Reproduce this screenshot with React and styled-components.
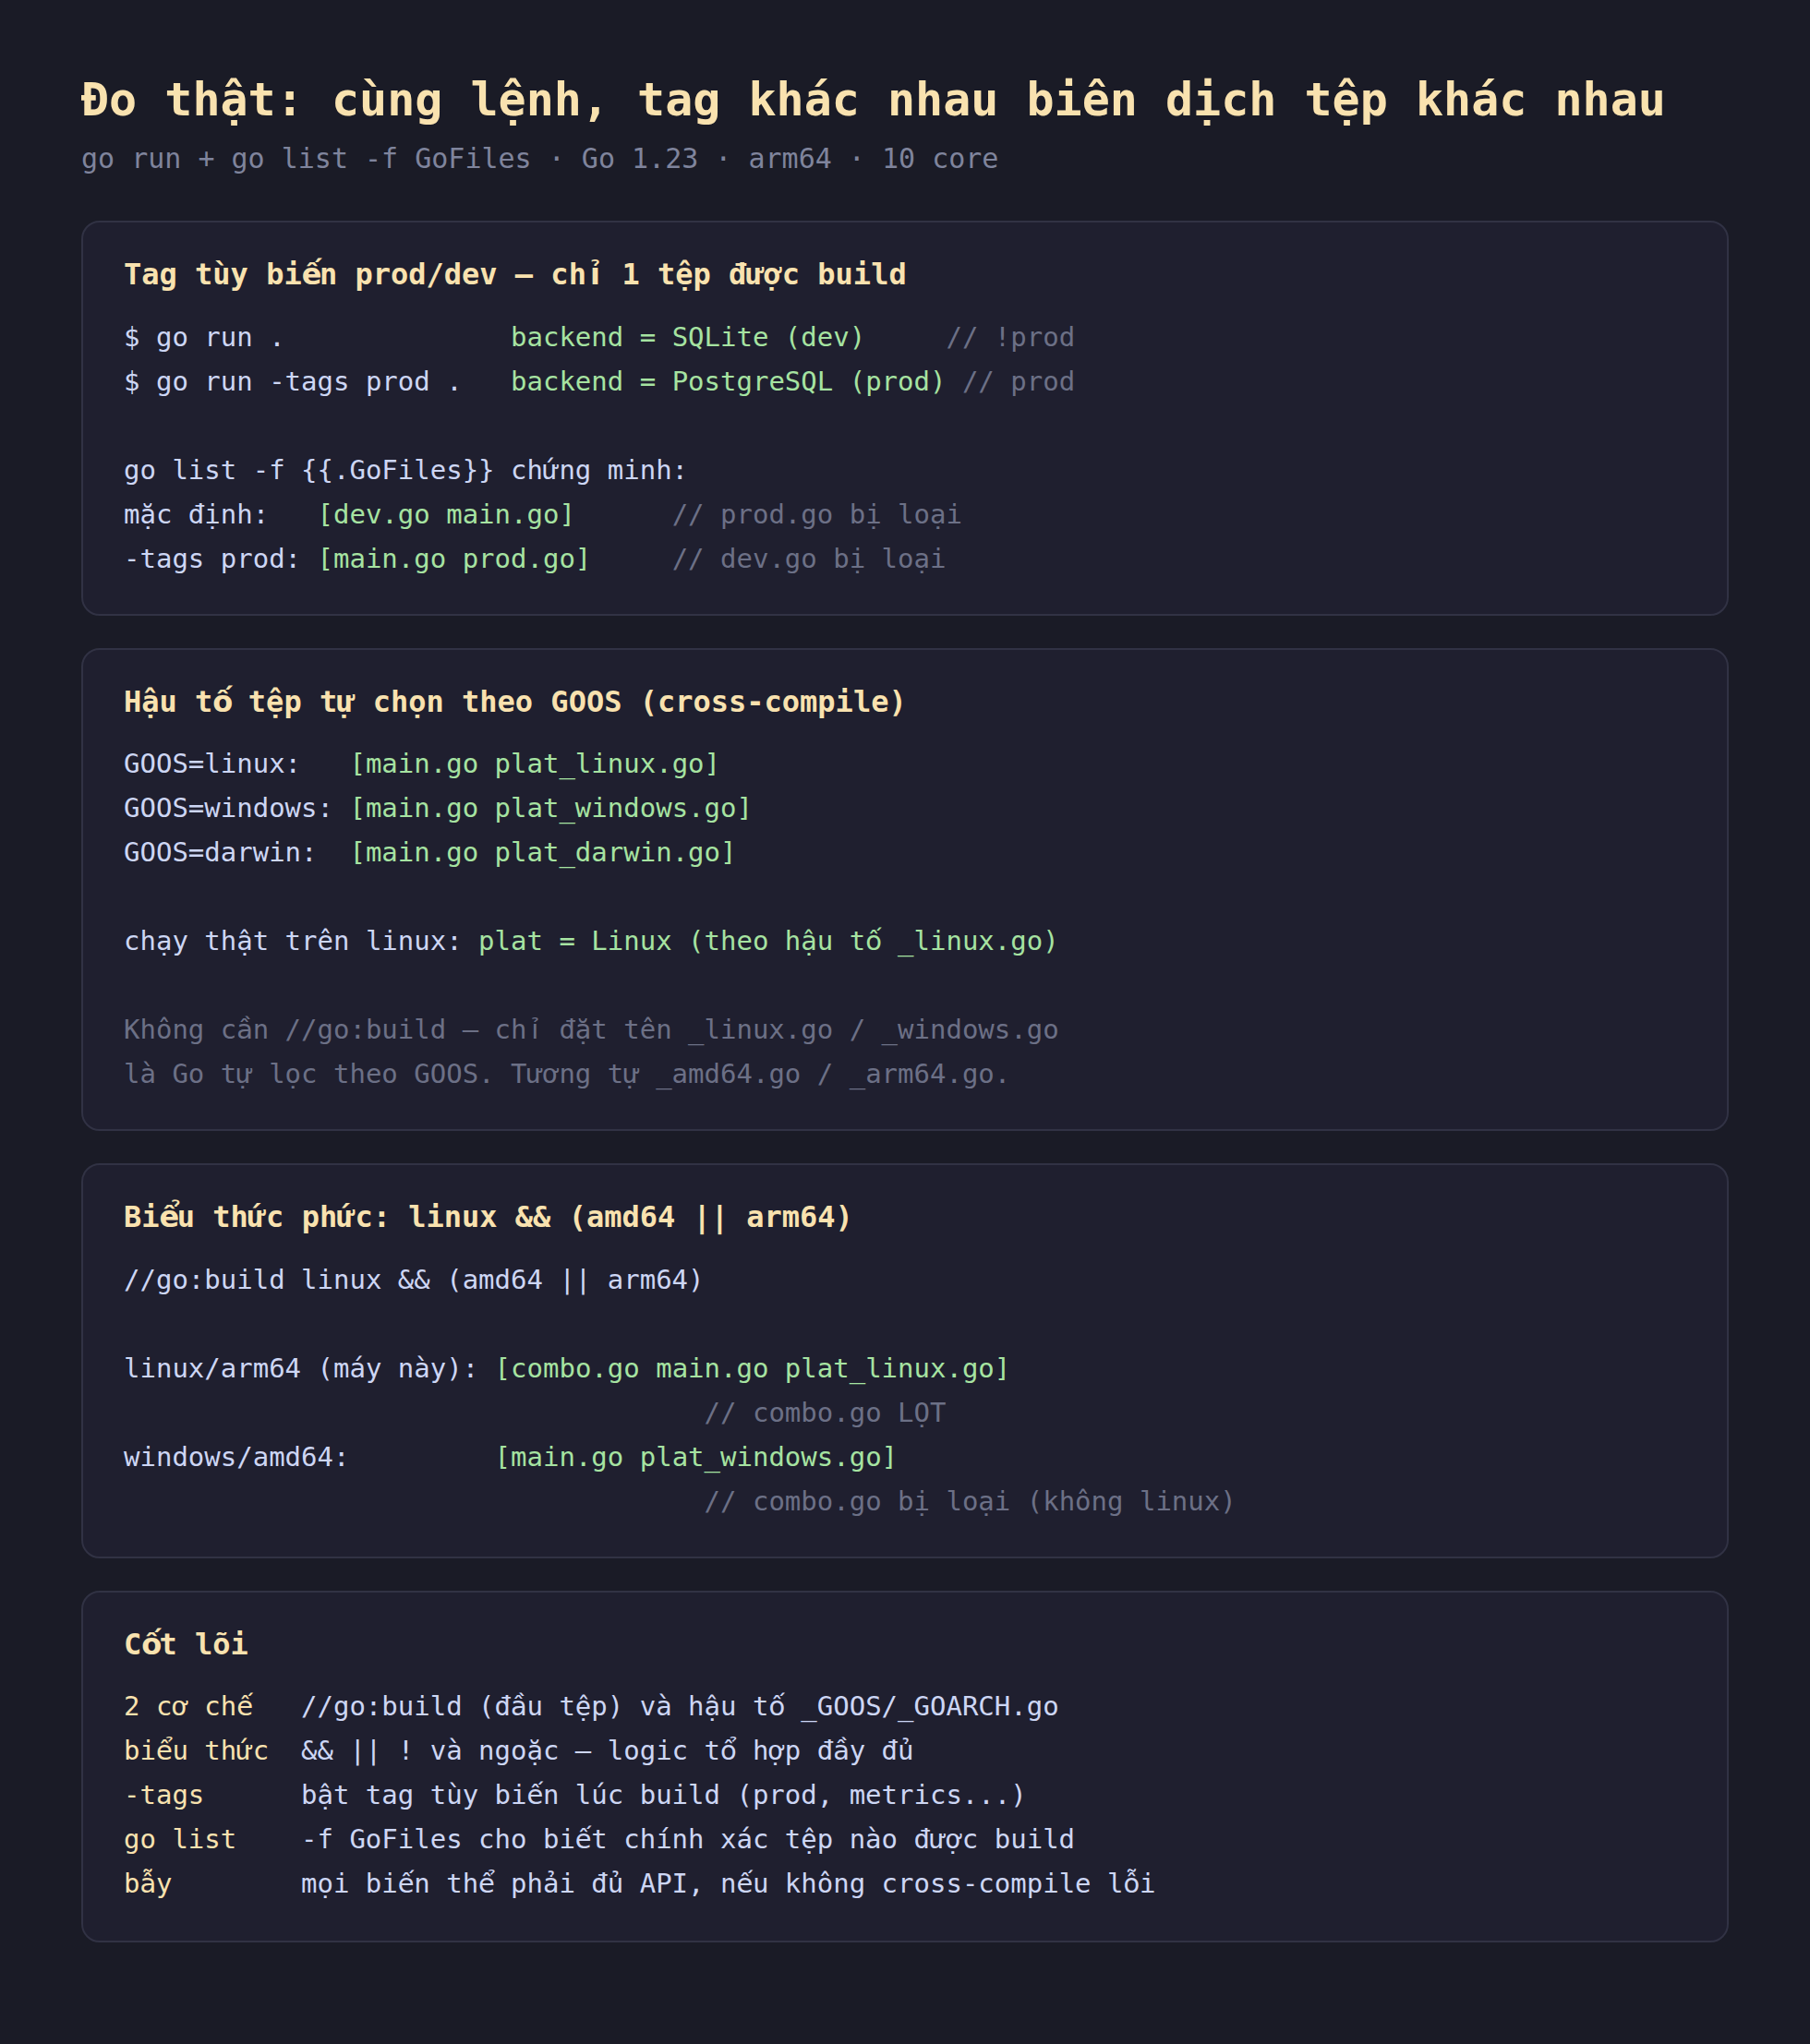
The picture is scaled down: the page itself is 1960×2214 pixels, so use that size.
import React from "react";
import styled, { createGlobalStyle } from "styled-components";

const GlobalStyle = createGlobalStyle`
  html, body {
    margin: 0;
    padding: 0;
    background: #1a1b26;
  }
  body {
    font-family: "DejaVu Sans Mono", monospace;
    color: #cdd6f4;
    min-height: 100vh;
  }
`;

const Page = styled.main`
  padding: 78px 88px 110px;
  display: flex;
  flex-direction: column;
  gap: 35px;
`;

const Header = styled.header`
  margin-bottom: 14px;
`;

const Title = styled.h1`
  margin: 0;
  font-size: 50px;
  line-height: 60px;
  font-weight: 700;
  color: #f9e2af;
`;

const Subtitle = styled.p`
  margin: 16px 0 0;
  font-size: 30px;
  line-height: 36px;
  color: #7f849c;
`;

const Card = styled.section`
  background: #1f1f2f;
  border: 2px solid #313244;
  border-radius: 20px;
  padding: 36px 44px;
`;

const CardTitle = styled.h2`
  margin: 0 0 22px;
  font-size: 32px;
  line-height: 1.3;
  font-weight: 700;
  color: #f9e2af;
`;

const Code = styled.div`
  font-size: 29px;
  line-height: 48px;
  white-space: pre;
  color: #cdd6f4;
`;

const Line = styled.div`
  min-height: 48px;
  color: ${(p) => (p.$muted ? "#6c7086" : "inherit")};
`;

const Ok = styled.span`
  color: #a6e3a1;
`;

const Note = styled.span`
  color: #6c7086;
`;

/* DejaVu Sans Mono lacks the stacked-mark Vietnamese letters,
   so they come from DejaVu Sans, held in a monospace cell */
const Glyph = styled.span`
  display: inline-block;
  width: 0.602em;
  text-align: center;
  font-family: "DejaVu Sans", sans-serif;
`;

const Summary = styled.dl`
  margin: 0 0 2px;
  display: grid;
  grid-template-columns: 9ch 1fr;
  column-gap: 2ch;
  font-size: 29px;
  line-height: 48px;
  white-space: pre;
`;

const Term = styled.dt`
  color: #f9e2af;
`;

const Desc = styled.dd`
  margin: 0;
  color: #cdd6f4;
`;

const SPLIT = /([ấầẩẫắằẳẵếềểễốồổỗỉ])/;

const v = (text) =>
  text.split(SPLIT).map((part, i) => (i % 2 === 1 ? <Glyph key={i}>{part}</Glyph> : part));

const summary = [
  ["2 cơ chế", "//go:build (đầu tệp) và hậu tố _GOOS/_GOARCH.go"],
  ["biểu thức", "&& || ! và ngoặc — logic tổ hợp đầy đủ"],
  ["-tags", "bật tag tùy biến lúc build (prod, metrics...)"],
  ["go list", "-f GoFiles cho biết chính xác tệp nào được build"],
  ["bẫy", "mọi biến thể phải đủ API, nếu không cross-compile lỗi"],
];

const PAD = " ".repeat(36);

export default function App() {
  return (
    <>
      <GlobalStyle />
      <Page>
        <Header>
          <Title>Đo thật: cùng lệnh, tag khác nhau biên dịch tệp khác nhau</Title>
          <Subtitle>go run + go list -f GoFiles · Go 1.23 · arm64 · 10 core</Subtitle>
        </Header>

        <Card>
          <CardTitle>{v("Tag tùy biến prod/dev — chỉ 1 tệp được build")}</CardTitle>
          <Code>
            <Line>
              {"$ go run .              "}
              <Ok>backend = SQLite (dev)</Ok>
              {"     "}
              <Note>// !prod</Note>
            </Line>
            <Line>
              {"$ go run -tags prod .   "}
              <Ok>backend = PostgreSQL (prod)</Ok>
              {" "}
              <Note>// prod</Note>
            </Line>
            <Line />
            <Line>{"go list -f {{.GoFiles}} chứng minh:"}</Line>
            <Line>
              {"mặc định:   "}
              <Ok>[dev.go main.go]</Ok>
              {"      "}
              <Note>// prod.go bị loại</Note>
            </Line>
            <Line>
              {"-tags prod: "}
              <Ok>[main.go prod.go]</Ok>
              {"     "}
              <Note>// dev.go bị loại</Note>
            </Line>
          </Code>
        </Card>

        <Card>
          <CardTitle>{v("Hậu tố tệp tự chọn theo GOOS (cross-compile)")}</CardTitle>
          <Code>
            <Line>
              {"GOOS=linux:   "}
              <Ok>[main.go plat_linux.go]</Ok>
            </Line>
            <Line>
              {"GOOS=windows: "}
              <Ok>[main.go plat_windows.go]</Ok>
            </Line>
            <Line>
              {"GOOS=darwin:  "}
              <Ok>[main.go plat_darwin.go]</Ok>
            </Line>
            <Line />
            <Line>
              {"chạy thật trên linux: "}
              <Ok>{v("plat = Linux (theo hậu tố _linux.go)")}</Ok>
            </Line>
            <Line />
            <Line $muted>{v("Không cần //go:build — chỉ đặt tên _linux.go / _windows.go")}</Line>
            <Line $muted>{"là Go tự lọc theo GOOS. Tương tự _amd64.go / _arm64.go."}</Line>
          </Code>
        </Card>

        <Card>
          <CardTitle>{v("Biểu thức phức: linux && (amd64 || arm64)")}</CardTitle>
          <Code>
            <Line>{"//go:build linux && (amd64 || arm64)"}</Line>
            <Line />
            <Line>
              {"linux/arm64 (máy này): "}
              <Ok>[combo.go main.go plat_linux.go]</Ok>
            </Line>
            <Line>
              {PAD}
              <Note>// combo.go LỌT</Note>
            </Line>
            <Line>
              {"windows/amd64:         "}
              <Ok>[main.go plat_windows.go]</Ok>
            </Line>
            <Line>
              {PAD}
              <Note>// combo.go bị loại (không linux)</Note>
            </Line>
          </Code>
        </Card>

        <Card>
          <CardTitle>{v("Cốt lõi")}</CardTitle>
          <Summary>
            {summary.map(([term, desc]) => (
              <React.Fragment key={term}>
                <Term>{v(term)}</Term>
                <Desc>{v(desc)}</Desc>
              </React.Fragment>
            ))}
          </Summary>
        </Card>
      </Page>
    </>
  );
}
